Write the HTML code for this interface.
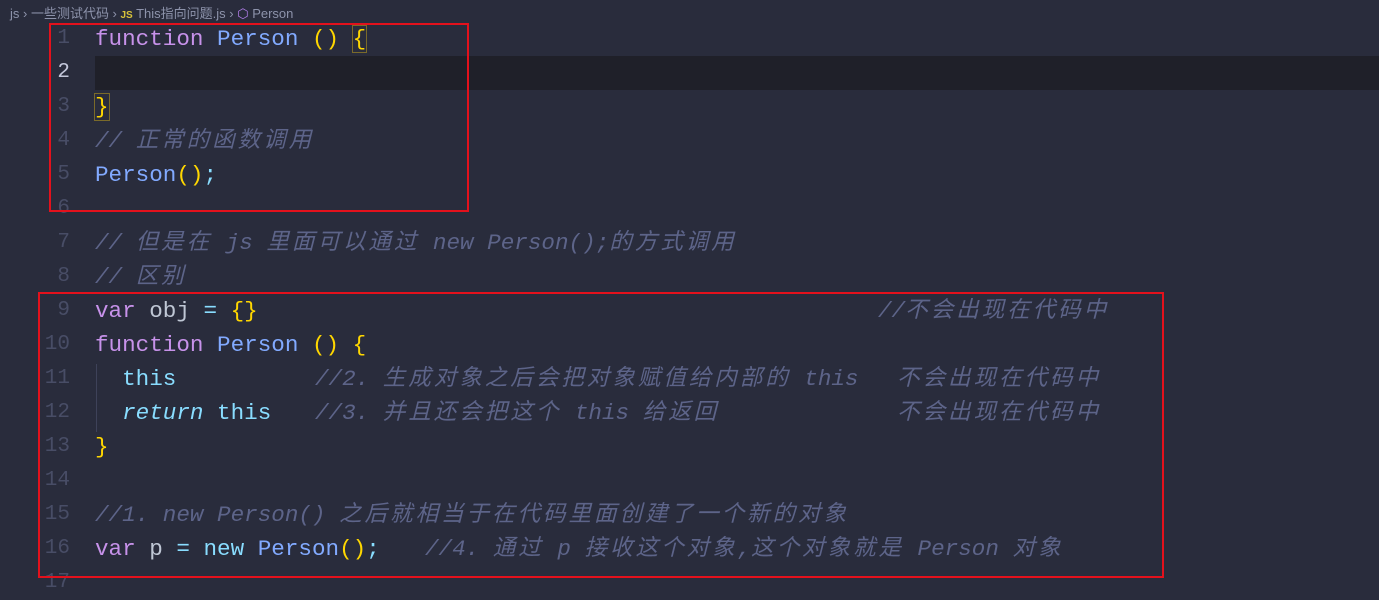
<!DOCTYPE html>
<html><head><meta charset="utf-8"><style>
body{margin:0;width:1379px;height:582px;overflow:hidden;background:#292c3c;position:relative;font-family:"Liberation Mono","Noto Sans CJK SC",monospace;}
.bc{position:absolute;top:3px;left:10px;font:13px "Liberation Sans","Noto Sans CJK SC",sans-serif;color:#8d93ab;white-space:nowrap}
.bc .js{color:#d8c33a;font-weight:bold;font-size:10px}
.hl{position:absolute;left:95px;right:0;top:56px;height:34px;background:#1f2029}
.ln{position:absolute;left:0;width:70px;text-align:right;font-size:21px;color:#484d66;line-height:34px}
.ln.cur{color:#c3c7da}
.l{position:absolute;left:95px;font-size:22.6px;line-height:34px;white-space:pre;color:#bfc7d5}
.k{color:#c792ea}.f{color:#82aaff}.y{color:#ffd700}.t{color:#89ddff}.c{color:#5d6489;font-style:italic}
.cj{letter-spacing:2.9px}
.box{position:absolute;border:2px solid #e3111c}
.guide{position:absolute;left:96px;top:364px;width:1px;height:68px;background:#3e4259}
.mb{outline:1px solid #7a6a2a}
</style></head><body>
<div class="bc">js › 一些测试代码 › <span class="js">JS</span> This指向问题.js › <span style="color:#b37feb">⬡</span> Person</div>
<div class="hl"></div>
<div class="guide"></div>
<div class="ln" style="top:22px">1</div>
<div class="ln cur" style="top:56px">2</div>
<div class="ln" style="top:90px">3</div>
<div class="ln" style="top:124px">4</div>
<div class="ln" style="top:158px">5</div>
<div class="ln" style="top:192px">6</div>
<div class="ln" style="top:226px">7</div>
<div class="ln" style="top:260px">8</div>
<div class="ln" style="top:294px">9</div>
<div class="ln" style="top:328px">10</div>
<div class="ln" style="top:362px">11</div>
<div class="ln" style="top:396px">12</div>
<div class="ln" style="top:430px">13</div>
<div class="ln" style="top:464px">14</div>
<div class="ln" style="top:498px">15</div>
<div class="ln" style="top:532px">16</div>
<div class="ln" style="top:566px">17</div>

<div class="l" style="top:22px"><span class="k">function</span> <span class="f">Person</span> <span class="y">()</span> <span class="y mb">{</span></div>
<div class="l" style="top:90px"><span class="y mb">}</span></div>
<div class="l c" style="top:124px">// <span class="cj">正常的函数调用</span></div>
<div class="l" style="top:158px"><span class="f">Person</span><span class="y">()</span><span class="t">;</span></div>
<div class="l c" style="top:226px">// <span class="cj">但是在</span> js <span class="cj">里面可以通过</span> new Person();<span class="cj">的方式调用</span></div>
<div class="l c" style="top:260px">// <span class="cj">区别</span></div>
<div class="l" style="top:294px"><span class="k">var</span> obj <span class="t">=</span> <span class="y">{}</span></div>
<div class="l c" style="top:294px;left:878px">//<span class="cj">不会出现在代码中</span></div>
<div class="l" style="top:328px"><span class="k">function</span> <span class="f">Person</span> <span class="y">()</span> <span class="y">{</span></div>
<div class="l" style="top:362px">  <span class="t">this</span></div>
<div class="l c" style="top:362px;left:315px">//2. <span class="cj">生成对象之后会把对象赋值给内部的</span> this</div>
<div class="l c" style="top:362px;left:897px"><span class="cj">不会出现在代码中</span></div>
<div class="l" style="top:396px">  <span class="t" style="font-style:italic">return</span> <span class="t">this</span></div>
<div class="l c" style="top:396px;left:315px">//3. <span class="cj">并且还会把这个</span> this <span class="cj">给返回</span></div>
<div class="l c" style="top:396px;left:897px"><span class="cj">不会出现在代码中</span></div>
<div class="l" style="top:430px"><span class="y">}</span></div>
<div class="l c" style="top:498px">//1. new Person() <span class="cj">之后就相当于在代码里面创建了一个新的对象</span></div>
<div class="l" style="top:532px"><span class="k">var</span> p <span class="t">=</span> <span class="t">new</span> <span class="f">Person</span><span class="y">()</span><span class="t">;</span></div>
<div class="l c" style="top:532px;left:425px">//4. <span class="cj">通过</span> p <span class="cj">接收这个对象</span>,<span class="cj">这个对象就是</span> Person <span class="cj">对象</span></div>

<div class="box" style="left:49px;top:23px;width:416px;height:185px"></div>
<div class="box" style="left:38px;top:292px;width:1122px;height:282px"></div>
</body></html>
